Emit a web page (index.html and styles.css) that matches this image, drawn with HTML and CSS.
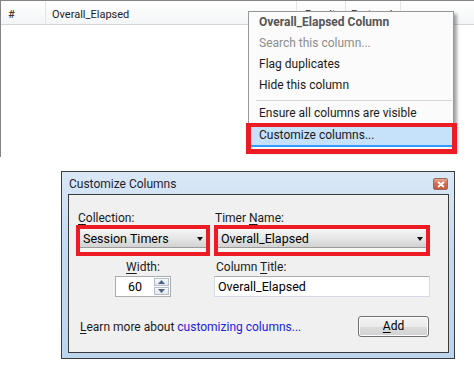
FILE: index.html
```html
<!DOCTYPE html>
<html>
<head>
<meta charset="utf-8">
<link rel="stylesheet" href="styles.css">
</head>
<body>
<div class="scene">
  <div class="grid">
    <div class="grid-head">
      <div class="hcell c-num">#</div>
      <div class="hcell c-elapsed">Overall_Elapsed</div>
      <div class="hcell c-result">Result</div>
      <div class="hcell c-proto">Protocol</div>
      <div class="hcell c-rest"></div>
    </div>
  </div>

  <div class="menu">
    <div class="mi mi-title">Overall_Elapsed Column</div>
    <div class="mi mi-disabled">Search this column...</div>
    <div class="mi">Flag duplicates</div>
    <div class="mi">Hide this column</div>
    <div class="msep"></div>
    <div class="mi">Ensure all columns are visible</div>
    <div class="mi mi-active">Customize columns...</div>
  </div>
  <div class="mark-menu"></div>

  <div class="dialog">
    <div class="titlebar">
      <span class="title">Customize Columns</span>
      <span class="close"><svg width="8" height="7" viewBox="0 0 8 7"><path d="M1 1 L7 6 M7 1 L1 6" stroke="#fff" stroke-width="1.8"/></svg></span>
    </div>
    <div class="client">
      <div class="form">
        <div class="lbl"><u>C</u>ollection:</div>
        <div class="lbl"><span>Timer <u>N</u>ame:</span></div>
        <div class="mark">
          <div class="combo"><span>Session Timers</span><i class="arrow"></i></div>
        </div>
        <div class="mark">
          <div class="combo"><span>Overall_Elapsed</span><i class="arrow"></i></div>
        </div>
        <div class="lbl lbl-center"><u>W</u>idth:</div>
        <div class="lbl">Column <u>T</u>itle:</div>
        <div class="spin-wrap">
          <div class="spin">
            <span class="spin-val">60</span>
            <span class="spin-btns">
              <span class="sb"><svg width="7" height="4" viewBox="0 0 7 4"><path d="M0 4 L3.5 0 L7 4Z" fill="#4d6185"/></svg></span>
              <span class="sb"><svg width="7" height="4" viewBox="0 0 7 4"><path d="M0 0 L3.5 4 L7 0Z" fill="#4d6185"/></svg></span>
            </span>
          </div>
        </div>
        <div class="textbox">Overall_Elapsed</div>
      </div>
      <div class="footer">
        <div class="learn"><u>L</u>earn more about <span class="link">customizing columns...</span></div>
        <div class="btn"><u>A</u>dd</div>
      </div>
    </div>
  </div>
</div>
</body>
</html>
```

FILE: styles.css
```css
html, body {
  margin: 0;
  padding: 0;
  background: #fff;
}
body {
  font-family: Roboto, "Liberation Sans", sans-serif;
  font-size: 12px;
  color: #000;
}
.scene {
  position: relative;
  width: 474px;
  height: 373px;
  overflow: hidden;
}

/* grid */
.grid {
  height: 157px;
  border-top: 1px solid #838383;
  border-left: 1px solid #838383;
  box-sizing: border-box;
}
.grid-head {
  display: flex;
  height: 24px;
  background: linear-gradient(#ffffff, #f4f5f7);
  border-bottom: 1px solid #d5d5d5;
  box-sizing: border-box;
}
.hcell {
  box-sizing: border-box;
  border-right: 1px solid #e3e4e6;
  font-size: 11px;
  line-height: 19px;
  padding-top: 4px;
  color: #1e1e1e;
  white-space: nowrap;
  overflow: hidden;
}
.c-num { width: 45px; padding-left: 7px; }
.c-elapsed { width: 251px; padding-left: 6px; }
.c-result { width: 49px; padding-left: 8px; }
.c-proto { width: 55px; padding-left: 5px; }
.c-rest { flex: 1; border-right: 0; }

/* context menu */
.menu {
  position: absolute;
  left: 248px;
  top: 11px;
  width: 206px;
  height: 139px;
  box-sizing: border-box;
  background: #fbfbfb;
  border: 1px solid #979797;
  box-shadow: 3px 3px 3px rgba(0,0,0,0.35);
  padding: 0 1px;
}
.mi {
  height: 21px;
  line-height: 21px;
  padding-left: 9px;
  font-size: 12px;
  color: #1a1a1a;
  white-space: nowrap;
}
.mi-title { font-weight: bold; color: #555; }
.mi-disabled { color: #8d8d8d; }
.msep {
  height: 1px;
  background: #d7d7d7;
  margin: 4px 0 2px 6px;
}
.mi-active {
  margin-top: 2px;
  background: #c6e1fa;
  border-bottom: 2px solid #3399ff;
  height: 19px;
  line-height: 19px;
}
.mark-menu {
  position: absolute;
  left: 246px;
  top: 123px;
  width: 211px;
  height: 31px;
  box-sizing: border-box;
  border: 5px solid #ed1c24;
  border-top-width: 4px;
}

/* dialog */
.dialog {
  margin: 14px 0 0 61px;
  width: 394px;
  height: 188px;
  box-sizing: border-box;
  border: 1px solid #3c3c3c;
  background: linear-gradient(#dae8f6, #c4daf1 40%, #bcd5ef);
  display: flex;
  flex-direction: column;
}
.titlebar {
  height: 22px;
  display: flex;
  align-items: flex-start;
  justify-content: space-between;
}
.title {
  padding-left: 7px;
  line-height: 24px;
  font-size: 12px;
  color: #1e1e2e;
}
.close {
  margin: 6px 6px 0 0;
  width: 15px;
  height: 12px;
  box-sizing: border-box;
  border: 1px solid #a5675a;
  border-radius: 2px;
  background: linear-gradient(#e6a894, #d36a4c 50%, #c5583a);
  display: flex;
  align-items: center;
  justify-content: center;
}
.client {
  flex: 1;
  margin: 0 5px 5px 6px;
  border: 1px solid #3a3a3a;
  background: #f0f0f0;
}
.form {
  display: grid;
  grid-template-columns: 134px 216px;
  column-gap: 4px;
  padding: 16px 0 0 7px;
}
.lbl {
  height: 14px;
  line-height: 14px;
  padding-left: 2px;
  color: #1a1a1a;
  white-space: nowrap;
}
.lbl:nth-child(2) { padding-left: 1px; }
.lbl-center { text-align: center; padding-left: 0; }
.form > .lbl:nth-child(5),
.form > .lbl:nth-child(6) { margin-top: 4px; }
u { text-decoration: underline; text-underline-offset: 2px; }
.mark {
  height: 31px;
  box-sizing: border-box;
  border: 4px solid #ed1c24;
  background: #f6f6f6;
}
.combo {
  height: 18px;
  box-sizing: border-box;
  border-bottom: 1px solid #9c9c9c;
  background: linear-gradient(#f3f3f3, #e6e6e6 50%, #d2d2d2);
  display: flex;
  align-items: center;
  justify-content: space-between;
  padding: 0 3px 0 3px;
  font-size: 12.5px;
  margin-top: 1px;
}
.arrow {
  width: 0;
  height: 0;
  border-left: 3.5px solid transparent;
  border-right: 3.5px solid transparent;
  border-top: 4px solid #111;
}
.spin-wrap {
  margin-top: 2px;
  display: flex;
  justify-content: center;
}
.spin {
  width: 56px;
  height: 21px;
  box-sizing: border-box;
  border: 1px solid #abadb3;
  background: #fff;
  display: flex;
  align-items: center;
  justify-content: space-between;
  padding: 0 1px 0 12px;
}
.spin-val { font-size: 12.5px; }
.spin-btns {
  display: flex;
  flex-direction: column;
  gap: 1px;
}
.sb {
  width: 15px;
  height: 8px;
  box-sizing: border-box;
  border: 1px solid #b8bcc4;
  background: linear-gradient(#f7f8fa, #e2e6ec);
  display: flex;
  align-items: center;
  justify-content: center;
}
.textbox {
  margin-top: 2px;
  height: 21px;
  box-sizing: border-box;
  border: 1px solid #d5dae2;
  border-top-color: #abadb3;
  background: #fff;
  padding-left: 3px;
  line-height: 19px;
  font-size: 12.5px;
}
.footer {
  display: flex;
  justify-content: space-between;
  align-items: center;
  padding: 19px 19px 0 11px;
}
.learn { color: #1a1a1a; }
.link { color: #2222dd; }
.btn {
  width: 71px;
  height: 21px;
  box-sizing: border-box;
  border: 1px solid #707070;
  border-radius: 3px;
  background: linear-gradient(#f3f3f3, #ebebeb 50%, #dcdcdc 51%, #d2d2d2);
  text-align: center;
  line-height: 19px;
  box-shadow: inset 0 0 0 1px #fcfcfc;
}
```
